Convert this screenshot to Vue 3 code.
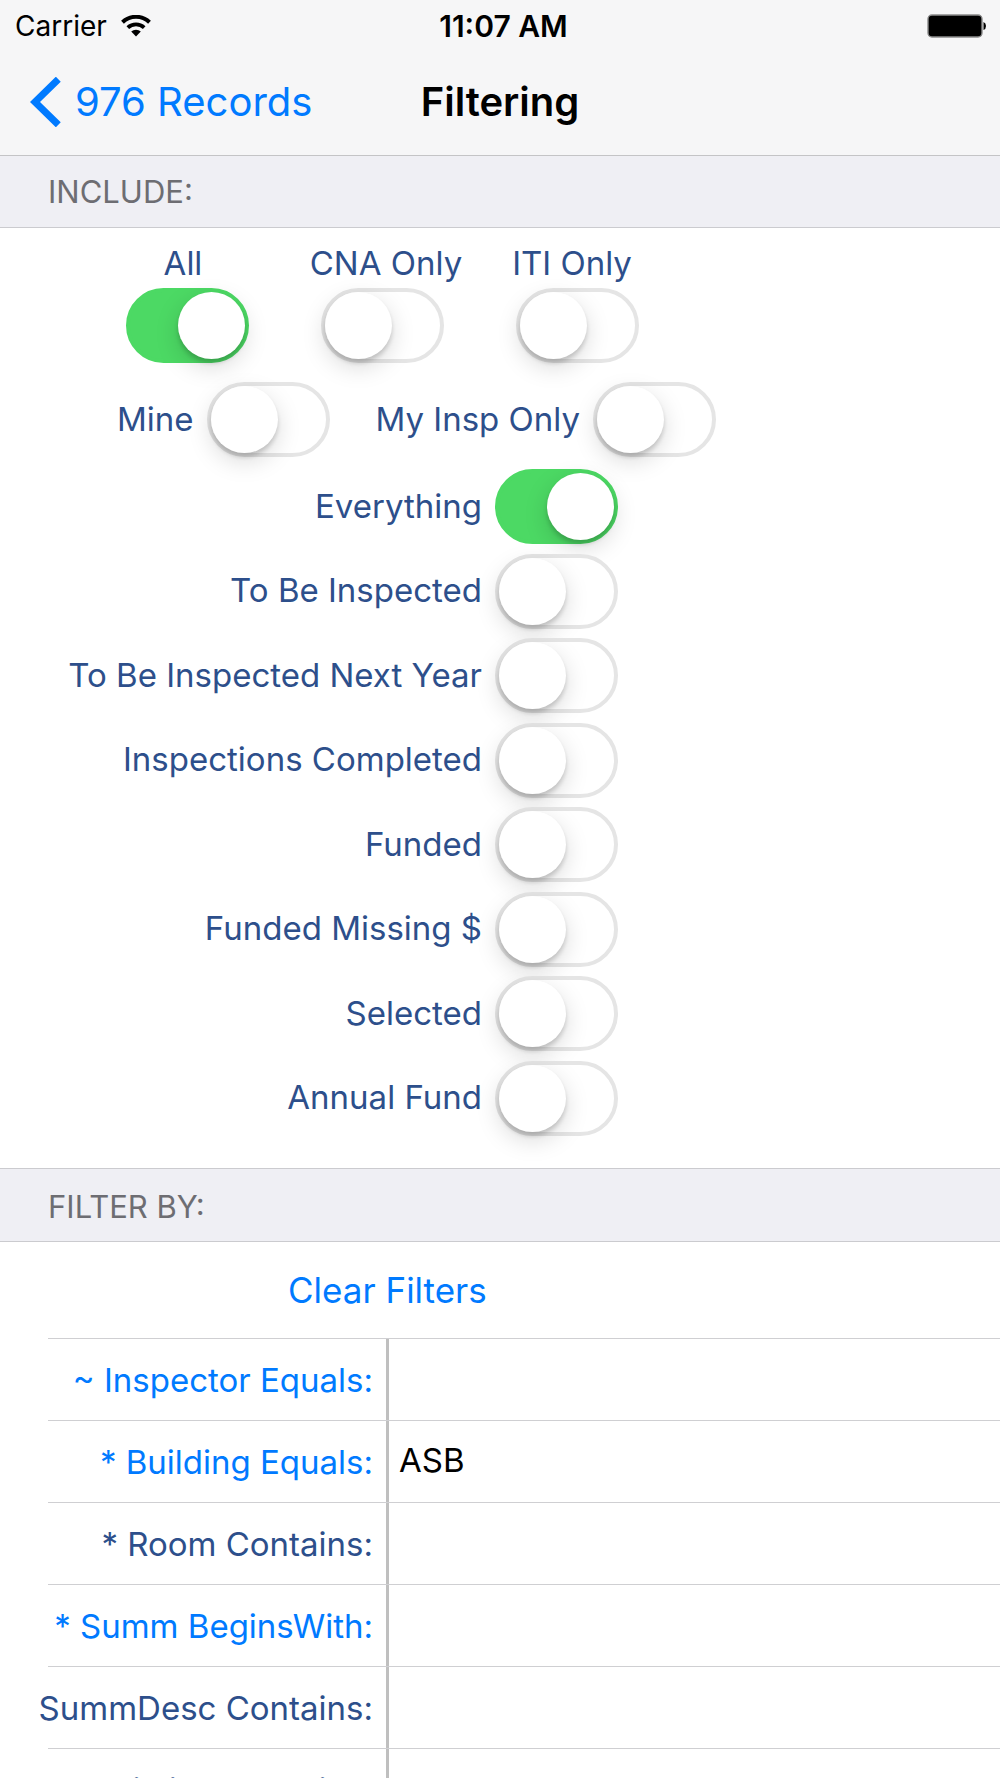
<script setup>
import { reactive } from 'vue'

const scope = reactive([
  { id: 'all', label: 'All', on: true },
  { id: 'cna', label: 'CNA Only', on: false },
  { id: 'iti', label: 'ITI Only', on: false },
])

const owner = reactive([
  { id: 'mine', label: 'Mine', on: false },
  { id: 'my-insp', label: 'My Insp Only', on: false },
])

const status = reactive([
  { id: 'everything', label: 'Everything', on: true },
  { id: 'to-inspect', label: 'To Be Inspected', on: false },
  { id: 'next-year', label: 'To Be Inspected Next Year', on: false },
  { id: 'completed', label: 'Inspections Completed', on: false },
  { id: 'funded', label: 'Funded', on: false },
  { id: 'missing', label: 'Funded Missing $', on: false },
  { id: 'selected', label: 'Selected', on: false },
  { id: 'annual', label: 'Annual Fund', on: false },
])

const filters = reactive([
  { id: 'inspector', label: '~ Inspector Equals:', lookup: true, value: '' },
  { id: 'building', label: '* Building Equals:', lookup: true, value: 'ASB' },
  { id: 'room', label: '* Room Contains:', lookup: false, value: '' },
  { id: 'summ', label: '* Summ BeginsWith:', lookup: true, value: '' },
  { id: 'summ-desc', label: 'SummDesc Contains:', lookup: false, value: '' },
  { id: 'building-text', label: 'Building Contains:', lookup: false, value: '' },
])

function clearFilters() {
  filters.forEach((f) => { f.value = '' })
}
</script>

<template>
  <div class="screen">
    <header class="top">
      <div class="status-bar">
        <div class="carrier">
          <span>Carrier</span>
          <svg class="wifi" viewBox="0 0 30 22" aria-hidden="true">
            <g fill="none" stroke="#000" stroke-width="4">
              <path d="M1.5 7.2 A19.5 19.5 0 0 1 28.5 7.2" />
              <path d="M6.8 12.6 A12 12 0 0 1 23.2 12.6" stroke-width="3.8" />
            </g>
            <path d="M10.2 16.6 A7 7 0 0 1 19.8 16.6 L15 21.6 Z" />
          </svg>
        </div>
        <time class="clock">11:07 AM</time>
        <svg class="battery" viewBox="0 0 59 24" role="img" aria-label="Battery full">
          <rect x="1" y="1" width="54" height="22" rx="4" fill="#000" stroke="#8a8a8a" stroke-width="1.4" />
          <path d="M56.5 8 Q59 9 59 12 T56.5 16 Z" />
        </svg>
      </div>
      <nav class="nav">
        <a class="back" href="#records">
          <svg class="chevron" viewBox="0 0 31 50" aria-hidden="true">
            <path d="M28.3 2.2 L5 25 L28.3 47.8" fill="none" stroke="#007aff" stroke-width="7" />
          </svg>
          <span>976 Records</span>
        </a>
        <h1 class="title">Filtering</h1>
      </nav>
    </header>

    <h2 class="section">INCLUDE:</h2>
    <section class="include">
      <div class="scope-labels">
        <label v-for="s in scope" :key="s.id" :for="s.id">{{ s.label }}</label>
      </div>
      <div class="scope-switches">
        <input v-for="s in scope" :id="s.id" :key="s.id" v-model="s.on" class="switch" type="checkbox" role="switch" />
      </div>
      <div class="owner">
        <div v-for="o in owner" :key="o.id" class="pair">
          <label :for="o.id">{{ o.label }}</label>
          <input :id="o.id" v-model="o.on" class="switch" type="checkbox" role="switch" />
        </div>
      </div>
      <div class="statuses">
        <div v-for="s in status" :key="s.id" class="pair">
          <label :for="s.id">{{ s.label }}</label>
          <input :id="s.id" v-model="s.on" class="switch" type="checkbox" role="switch" />
        </div>
      </div>
    </section>

    <h2 class="section second">FILTER BY:</h2>
    <form class="filters" @submit.prevent>
      <div class="clear-row">
        <button type="button" class="clear" @click="clearFilters">Clear Filters</button>
      </div>
      <div v-for="f in filters" :key="f.id" class="filter">
        <label :for="f.id" :class="{ lookup: f.lookup }">{{ f.label }}</label>
        <input :id="f.id" v-model="f.value" type="text" autocomplete="off" />
      </div>
    </form>
  </div>
</template>

<style>
body {
  margin: 0;
  background: #fff;
}
</style>

<style scoped>
.screen {
  height: 100vh;
  overflow: hidden;
  font-family: Inter, "Liberation Sans", sans-serif;
  font-size: 33px;
  line-height: 40px;
  color: #2d4f8b;
  background: #fff;
}

.top {
  background: #f6f6f7;
  border-bottom: 1px solid #c4c4c6;
  color: #000;
}

.status-bar {
  display: grid;
  grid-template-columns: 1fr auto 1fr;
  align-items: center;
  height: 51px;
  padding: 0 14px 0 15px;
  font-size: 28px;
}

.carrier {
  display: flex;
  align-items: center;
  gap: 14px;
}

.wifi {
  width: 30px;
  height: 22px;
}

.clock {
  padding-left: 6px;
  font-size: 30px;
  font-weight: 600;
}

.battery {
  justify-self: end;
  width: 59px;
  height: 24px;
}

.nav {
  display: grid;
  grid-template-columns: 1fr auto 1fr;
  align-items: center;
  height: 104px;
  padding: 0 30px 3px;
  box-sizing: border-box;
  font-size: 40px;
}

.back {
  display: flex;
  align-items: center;
  gap: 14px;
  color: #007aff;
  text-decoration: none;
  white-space: nowrap;
}

.chevron {
  width: 31px;
  height: 50px;
}

.title {
  margin: 0;
  font-size: 40px;
  font-weight: 600;
}

.section {
  display: flex;
  align-items: center;
  box-sizing: border-box;
  height: 72px;
  margin: 0;
  padding: 1px 0 0 48px;
  background: #efeff4;
  border-bottom: 1px solid #cbcbcf;
  color: #6d6d72;
  font-size: 31px;
  font-weight: 400;
}

.second {
  height: 74px;
  padding-top: 3px;
  border-top: 1px solid #cbcbcf;
}

.include {
  padding: 15px 0 32px;
}

.scope-labels {
  display: grid;
  grid-template-columns: 206px 200px 172px;
  padding-left: 80px;
  text-align: center;
}

.scope-switches {
  display: flex;
  gap: 72px;
  padding: 5px 0 19px 126px;
}

.switch {
  flex: none;
  appearance: none;
  box-sizing: border-box;
  width: 123px;
  height: 75px;
  margin: 0;
  border: 4px solid #e5e5e5;
  border-radius: 38px;
  background: #fff;
}

.switch::before {
  content: "";
  display: block;
  width: 67px;
  height: 67px;
  border-radius: 50%;
  background: #fff;
  box-shadow: 0 8px 24px rgba(0, 0, 0, 0.15), 0 4px 4px rgba(0, 0, 0, 0.16);
}

.switch:checked {
  border-color: #4cd964;
  background: #4cd964;
}

.switch:checked::before {
  margin-left: 48px;
}

.pair {
  display: flex;
  align-items: center;
  justify-content: flex-end;
  gap: 13px;
}

.pair label {
  padding-bottom: 2px;
}

.owner {
  display: flex;
  gap: 46px;
  padding-left: 117px;
}

.statuses {
  display: flex;
  flex-direction: column;
  justify-content: space-between;
  width: 618px;
  min-height: 667px;
  padding-top: 12px;
}

.clear-row {
  height: 96px;
  padding-left: 288px;
  display: flex;
  align-items: center;
}

.clear {
  padding: 0;
  border: 0;
  background: none;
  color: #007aff;
  font: inherit;
  font-size: 35px;
}

.filter {
  display: flex;
  height: 81px;
  margin-left: 48px;
  border-top: 1px solid #cfcfd2;
}

.filter label {
  display: flex;
  flex: none;
  align-items: center;
  justify-content: flex-end;
  width: 338px;
  box-sizing: border-box;
  padding: 1px 13px 0 0;
  white-space: nowrap;
}

.filter .lookup {
  color: #007aff;
}

.filter input {
  flex: 1;
  min-width: 0;
  padding: 0 10px 3px;
  border: 0;
  border-left: 3px solid #bfbfbf;
  border-radius: 0;
  outline: 0;
  background: none;
  color: #000;
  font: inherit;
}
</style>
